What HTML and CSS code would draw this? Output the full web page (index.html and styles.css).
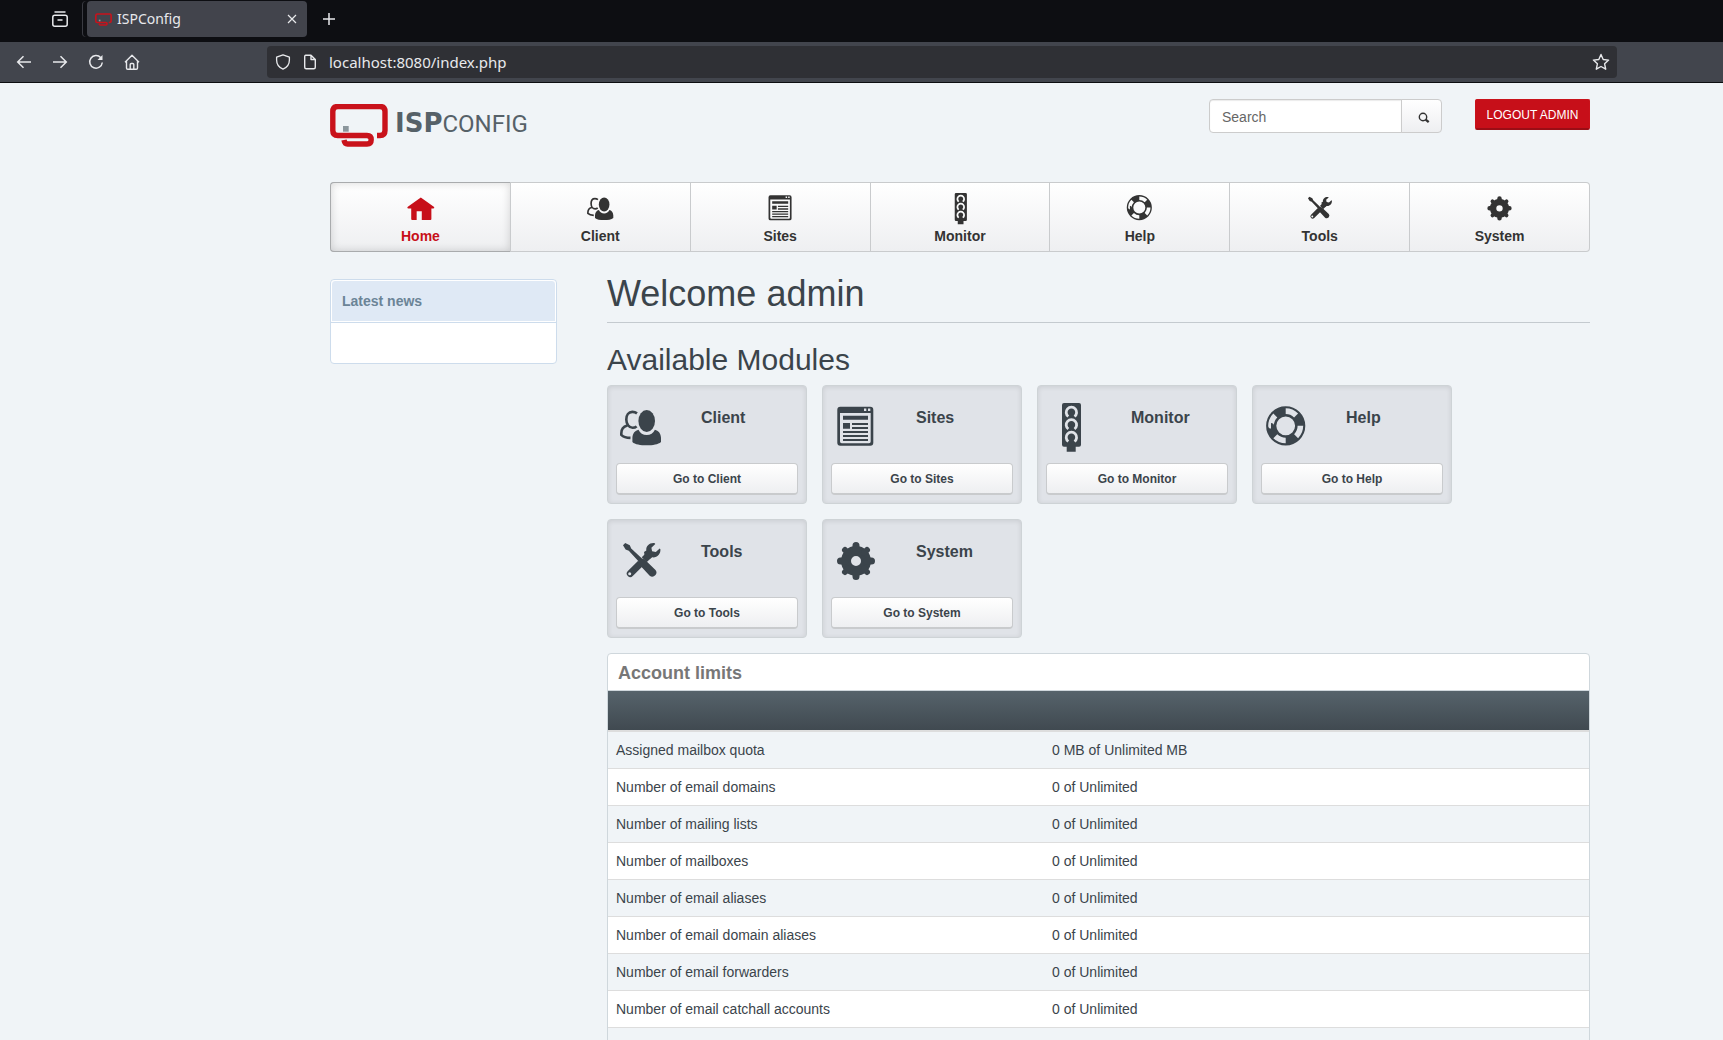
FILE: index.html
```html
<!DOCTYPE html>
<html lang="en">
<head>
<meta charset="utf-8">
<title>ISPConfig</title>
<link rel="stylesheet" href="styles.css">
</head>
<body>
<svg class="sprite" aria-hidden="true">
  <symbol id="i-logo" viewBox="0 0 58 43">
    <g fill="none" stroke="#c9121b" stroke-width="5.4">
      <path d="M47 31.5h3q5 0 5-5V7.500q0-5-5-5H7.800q-5 0-5 5v19q0 5 5 5H37q4.200 0 4.200 4.200T37 40H17.500q-2.800 0-3.500-4"/>
    </g>
    <path d="M13 22h5.700v5.700H13z" fill="#8b969c"/>
  </symbol>
  <symbol id="i-home" viewBox="0 0 48 50">
    <path d="M24.500 7.200 44.800 21.500q2 2.400-1 2.700H41V40.500q0 1.500-1.500 1.500H26V28.500h-8V42h-7q-1.500 0-1.500-1.500V24.200H5.200q-3-.3-1-2.700z" fill="currentColor"/>
  </symbol>
  <symbol id="i-client" viewBox="0 0 48 50">
    <g fill="currentColor">
      <ellipse cx="29.700" cy="18" rx="8.300" ry="11"/>
      <path d="M21.500 26.700c1.500 3.300 4.500 5.300 8.200 5.300s6.700-2 8.200-5.300c3.400.8 5.900 3.500 6.100 8v4.300c-3 2.600-8 3.300-14.300 3.300S18 41.600 15.400 39v-4.300c.2-4.500 2.700-7.200 6.100-8z"/>
    </g>
    <path d="M20 10.400c-1.300-1-3-1.500-4.700-1.500-3.700 0-6 3.300-6 7.500 0 5.200 3 8.400 6.300 8.400 1.700 0 3-.5 4-1.500M10.200 22.600C6.400 23.600 4.300 26.600 4.300 30.500v1.300c2 2 5.500 3 9.200 3.100" fill="none" stroke="currentColor" stroke-width="2.600"/>
  </symbol>
  <symbol id="i-sites" viewBox="0 0 48 50">
    <path fill="currentColor" fill-rule="evenodd" d="M8.300 3.700h30q3 0 3 3v33q0 3-3 3h-30q-3 0-3-3v-33q0-3 3-3zM8 10v28.500q0 1.700 1.700 1.700H37q1.700 0 1.700-1.700V10zM32 5.500V8h2.300V5.500zm4 0V8h2.300V5.500zM11 12.700h25v4H11zm0 7.300h7v5.700h-7zm9 0h16v2H20zm0 4h16v2H20zm-9 4h25v2H11zm0 4h25v2H11zm0 4h25v2H11z"/>
  </symbol>
  <symbol id="i-monitor" viewBox="0 0 48 50">
    <path fill="currentColor" d="M17 0h15q2 0 2 2v39.700q0 2-2 2h-3.300v5h-9v-5H17q-2 0-2-2V2q0-2 2-2z"/>
    <path fill="none" stroke="var(--hole)" stroke-width="2.800" d="M21.300 13.500a5.200 5.200 0 1 1 6.200 0M21.300 26a5.200 5.200 0 1 1 6.200 0M21.300 38.500a5.200 5.200 0 1 1 6.200 0"/>
  </symbol>
  <symbol id="i-help" viewBox="0 0 48 50">
    <circle cx="23.700" cy="22.800" r="14.500" fill="none" stroke="currentColor" stroke-width="10.200"/>
    <circle cx="23.700" cy="22.800" r="14.700" fill="none" stroke="var(--hole)" stroke-width="5.600" pathLength="80" stroke-dasharray="10 10"/>
  </symbol>
  <symbol id="i-tools" viewBox="0 0 48 50">
    <path fill="none" stroke="currentColor" stroke-width="7" stroke-linecap="round" d="M13.300 36.500 31 19"/>
    <path fill="currentColor" d="M28 20.500l-1-5.500 2.300-1.500c-.6-4.500 3.500-8 8.400-7.300l.6.700-3.900 3.800.7 3.500 3.700.7 3.900-3.500.7.800c.4 5-3.500 8.800-8.200 8.100l-2.700 2z"/>
    <circle cx="12.700" cy="36.700" r="1.500" fill="var(--hole)"/>
    <path stroke="var(--hole)" stroke-width="5" d="m20 19 9 9"/>
    <path fill="currentColor" d="M6 8.300 8.200 6l4.600 2.300 1.400 3.200L24.700 21.300q2.100.4 3.500 1.800l10.300 9.800q2 2.400 0 5-2.700 3-5.800.8l-9.300-10q-1.800-1.800-1.700-4.300L11.800 13.700 8.600 12.500z"/>
  </symbol>
  <symbol id="i-system" viewBox="0 0 48 50">
    <g fill="none" stroke="currentColor" stroke-linecap="round">
      <circle cx="24" cy="24" r="10" stroke-width="10"/>
      <path stroke-width="7" d="M24 8.500V13M24 35v4.500M8.500 24H13M35 24h4.500"/>
      <path stroke-width="6" d="m13 13 3 3M32 32l3 3M13 35l3-3M32 16l3-3"/>
    </g>
  </symbol>
</svg>

<header class="browser">
  <div class="tabbar">
    <button class="chrome-btn" aria-label="List tabs"><svg width="16" height="16" viewBox="0 0 16 16" fill="none" stroke="currentColor" stroke-width="1.500"><rect x=".8" y="4.200" width="14.400" height="11" rx="2"/><path d="M2.500 1h11M5.500 9h5"/></svg></button>
    <div class="tab">
      <svg class="favicon" width="17" height="13"><use href="#i-logo"/></svg>
      <span class="tab-title">ISPConfig</span>
      <button class="chrome-btn" aria-label="Close tab"><svg width="10" height="10" viewBox="0 0 10 10" stroke="currentColor" stroke-width="1.200"><path d="m1 1 8 8M9 1 1 9"/></svg></button>
    </div>
    <button class="chrome-btn" aria-label="New tab"><svg width="14" height="14" viewBox="0 0 14 14" stroke="currentColor" stroke-width="1.500"><path d="M7 1v12M1 7h12"/></svg></button>
  </div>
  <div class="toolbar">
    <div class="nav-buttons">
      <button class="chrome-btn" aria-label="Back"><svg width="16" height="16" viewBox="0 0 16 16" fill="none" stroke="currentColor" stroke-width="1.500"><path d="M15 8H2M7.500 2.200 1.700 8l5.800 5.800"/></svg></button>
      <button class="chrome-btn" aria-label="Forward"><svg width="16" height="16" viewBox="0 0 16 16" fill="none" stroke="currentColor" stroke-width="1.500"><path d="M1 8h13M8.500 2.200 14.300 8l-5.800 5.800"/></svg></button>
      <button class="chrome-btn" aria-label="Reload"><svg width="16" height="16" viewBox="0 0 16 16" fill="none" stroke="currentColor" stroke-width="1.500"><path d="M12.800 3.700A6.300 6.300 0 1 0 14.300 8.500"/><path d="M14.500 1v5H9.500z" fill="currentColor" stroke="none"/></svg></button>
      <button class="chrome-btn" aria-label="Home"><svg width="16" height="16" viewBox="0 0 16 16" fill="none" stroke="currentColor" stroke-width="1.400" stroke-linejoin="round"><path d="M1 8.200 8 1.200l7 7M2.500 7v7q0 1.200 1.200 1.200h8.600q1.200 0 1.200-1.200V7M6.200 15v-4.500q0-1 1-1h1.600q1 0 1 1V15"/></svg></button>
    </div>
    <div class="urlbar">
      <svg width="16" height="16" viewBox="0 0 16 16" fill="none" stroke="currentColor" stroke-width="1.300" stroke-linejoin="round"><path d="M8 .8 14.400 3.200V6q0 6.500-6.400 9.200Q1.600 12.500 1.600 6V3.200z"/></svg>
      <svg width="16" height="16" viewBox="0 0 16 16" fill="none" stroke="currentColor" stroke-width="1.400" stroke-linejoin="round"><path d="M3.700 1.200H9L13.300 5.500v7.800q0 1.500-1.500 1.500H4.200q-1.500 0-1.500-1.500V2.700q0-1.500 1-1.500zM9 1.200v4.300h4.300"/></svg>
      <input class="url" type="text" aria-label="Address" value="localhost:8080/index.php">
      <svg width="18" height="18" viewBox="0 0 18 18" fill="none" stroke="currentColor" stroke-width="1.400" stroke-linejoin="round"><path d="m9 1.500 2.200 5 5.400.6-4 3.700 1.100 5.400L9 13.500l-4.700 2.700 1.100-5.400-4-3.700 5.400-.6z"/></svg>
    </div>
  </div>
</header>

<div class="viewport">
  <div class="page">
    <div class="masthead">
      <a class="logo" href="#"><svg width="58" height="43"><use href="#i-logo"/></svg><span class="logo-text"><b>ISP</b>CONFIG</span></a>
      <form class="search">
        <input type="text" placeholder="Search" aria-label="Search">
        <button type="button" aria-label="Submit search"><svg width="12" height="12" viewBox="0 0 12 12" fill="none" stroke="currentColor"><circle cx="5" cy="5" r="3.700" stroke-width="1.400"/><path d="m7.700 7.700 3 2.500" stroke-width="2.400"/></svg></button>
      </form>
      <button class="logout">LOGOUT ADMIN</button>
    </div>

    <nav class="mainnav">
      <a class="active" href="#"><svg><use href="#i-home"/></svg>Home</a>
      <a href="#"><svg><use href="#i-client"/></svg>Client</a>
      <a href="#"><svg><use href="#i-sites"/></svg>Sites</a>
      <a href="#"><svg><use href="#i-monitor"/></svg>Monitor</a>
      <a href="#"><svg><use href="#i-help"/></svg>Help</a>
      <a href="#"><svg><use href="#i-tools"/></svg>Tools</a>
      <a href="#"><svg><use href="#i-system"/></svg>System</a>
    </nav>

    <div class="columns">
      <aside class="news">
        <h2>Latest news</h2>
        <div class="news-body"></div>
      </aside>
      <main>
        <h1>Welcome admin</h1>
        <h2 class="section-title">Available Modules</h2>
        <div class="modules">
          <section class="module"><svg><use href="#i-client"/></svg><h3>Client</h3><button>Go to Client</button></section>
          <section class="module"><svg><use href="#i-sites"/></svg><h3>Sites</h3><button>Go to Sites</button></section>
          <section class="module"><svg><use href="#i-monitor"/></svg><h3>Monitor</h3><button>Go to Monitor</button></section>
          <section class="module"><svg><use href="#i-help"/></svg><h3>Help</h3><button>Go to Help</button></section>
          <section class="module"><svg><use href="#i-tools"/></svg><h3>Tools</h3><button>Go to Tools</button></section>
          <section class="module"><svg><use href="#i-system"/></svg><h3>System</h3><button>Go to System</button></section>
        </div>
        <div class="limits">
          <table>
            <caption>Account limits</caption>
            <thead><tr><th></th><th></th></tr></thead>
            <tbody>
              <tr><td>Assigned mailbox quota</td><td>0 MB of Unlimited MB</td></tr>
              <tr><td>Number of email domains</td><td>0 of Unlimited</td></tr>
              <tr><td>Number of mailing lists</td><td>0 of Unlimited</td></tr>
              <tr><td>Number of mailboxes</td><td>0 of Unlimited</td></tr>
              <tr><td>Number of email aliases</td><td>0 of Unlimited</td></tr>
              <tr><td>Number of email domain aliases</td><td>0 of Unlimited</td></tr>
              <tr><td>Number of email forwarders</td><td>0 of Unlimited</td></tr>
              <tr><td>Number of email catchall accounts</td><td>0 of Unlimited</td></tr>
              <tr><td></td><td></td></tr>
            </tbody>
          </table>
        </div>
      </main>
    </div>
  </div>
</div>
</body>
</html>
```
FILE: styles.css
```css
* { box-sizing: border-box; }

body {
  margin: 0;
  height: 100vh;
  display: flex;
  flex-direction: column;
  overflow: hidden;
  background: #f0f4f7;
  color: #3b444b;
  font: 14px/20px "Liberation Sans", Arial, sans-serif;
}

h1, h2, h3 { margin: 0; }
button, input { font: inherit; color: inherit; }
a { color: inherit; text-decoration: none; }
svg { display: block; flex: none; }
.sprite { position: absolute; width: 0; height: 0; }

/* Browser window */
.browser {
  flex: none;
  color: #e8e9ec;
  font: 15px/24px "Noto Sans", sans-serif;
  border-bottom: 1px solid #0c0d10;
}
.chrome-btn {
  padding: 0;
  border: 0;
  background: none;
}
.tabbar {
  display: flex;
  align-items: center;
  height: 42px;
  padding: 0 16px 4px 52px;
  background: #0d0e12;
}
.tab {
  display: flex;
  align-items: center;
  width: 220px;
  height: 36px;
  margin: 0 15px 0 19px;
  padding: 0 10px 0 8px;
  border-radius: 4px;
  background: #42444c;
  box-shadow: -4px 0 0 #0d0e12, -5px 0 0 #3a3b42;
}
.tab-title { flex: 1; margin-left: 5px; font-size: 14px; }
.toolbar {
  display: flex;
  align-items: center;
  height: 40px;
  padding: 0 106px 0 16px;
  background: #42454d;
}
.nav-buttons {
  display: flex;
  gap: 20px;
  width: 251px;
}
.urlbar {
  flex: 1;
  display: flex;
  align-items: center;
  gap: 11px;
  height: 32px;
  padding: 0 7px 0 8px;
  border-radius: 4px;
  background: #2f3035;
}
.url {
  flex: 1;
  padding: 0;
  border: 0;
  outline: 0;
  background: none;
}

/* Page frame */
.viewport { flex: 1; min-height: 0; overflow: hidden; }
.page { padding: 16px 133px 0 330px; }

.masthead {
  display: flex;
  align-items: flex-start;
  height: 83px;
}
.logo {
  display: flex;
  align-items: flex-start;
  margin: 5px auto 0 0;
  gap: 7px;
}
.logo-text {
  font: 24px/38px Roboto, sans-serif;
  color: #566168;
}
.logo-text b { font: bold 26px/38px "DejaVu Sans", sans-serif; }

.search {
  display: flex;
  width: 233px;
  height: 34px;
  margin-right: 33px;
}
.search input {
  flex: 1;
  min-width: 0;
  padding: 2px 12px 0;
  border: 1px solid #ccc;
  border-radius: 4px 0 0 4px;
  background: #fff;
  box-shadow: inset 0 1px 1px rgba(0, 0, 0, .08);
}
.search input::placeholder { color: #666; opacity: 1; }
.search button {
  display: flex;
  align-items: center;
  justify-content: center;
  width: 41px;
  margin-left: -1px;
  padding: 4px 0 0 4px;
  border: 1px solid #ccc;
  border-radius: 0 4px 4px 0;
  background: linear-gradient(#fff, #eeeff1);
  color: #333;
}
.logout {
  width: 115px;
  height: 31px;
  padding: 2px 0 0;
  border: 1px solid #c9121b;
  border-bottom: 2px solid #9b0d15;
  border-radius: 2px;
  background: #c70f19;
  color: #fff;
  font-size: 12px;
}

.mainnav {
  display: flex;
  height: 70px;
  border: 1px solid #c9cbcd;
  border-left: 0;
  border-radius: 4px;
  background: linear-gradient(#fff, #eeeff1);
  color: #333;
  --hole: #f9fafa;
}
.mainnav a {
  flex: 1 1 0;
  display: flex;
  flex-direction: column;
  align-items: center;
  padding-top: 10px;
  border-left: 1px solid #c9cbcd;
  font-weight: bold;
}
.mainnav svg { width: 31px; height: 32px; margin-bottom: 1px; }
.mainnav .active {
  margin: -1px 0;
  border: 1px solid #a9abad;
  border-right-width: 0;
  border-radius: 4px 0 0 4px;
  color: #c70f19;
  box-shadow: inset 0 0 8px rgba(0, 0, 0, .16);
}

.columns {
  display: flex;
  align-items: flex-start;
  gap: 50px;
  margin-top: 27px;
}

/* News sidebar */
.news {
  width: 227px;
  border: 1px solid #cddcec;
  border-radius: 4px;
  background: #fff;
}
.news h2 {
  padding: 11px 10px;
  border: 1px solid #fff;
  border-radius: 4px 4px 0 0;
  background: #dfe9f5;
  color: #6b8497;
  font-size: 14px;
  line-height: 18px;
}
.news-body { height: 41px; border-top: 1px solid #cddcec; }

/* Dashboard */
main { flex: 1; min-width: 0; }
h1 {
  height: 44px;
  border-bottom: 1px solid #c4cacf;
  font-size: 36px;
  font-weight: normal;
  line-height: 30px;
}
.section-title {
  margin: 20px 0 8px;
  font-size: 30px;
  font-weight: normal;
  line-height: 34px;
}
.modules {
  display: flex;
  flex-wrap: wrap;
  gap: 15px;
  max-width: 860px;
}
.module {
  display: grid;
  grid-template-columns: 85px 1fr;
  grid-template-rows: 59px 32px;
  width: 200px;
  height: 119px;
  padding: 17px 8px 0;
  row-gap: 1px;
  border: 1px solid #ced3d6;
  border-radius: 4px;
  background: #e0e3e8;
  box-shadow: inset 0 1px 5px rgba(0, 0, 0, .1);
  --hole: #e0e3e8;
}
.module svg { width: 48px; height: 50px; margin-left: 1px; }
.module h3 {
  padding-top: 5px;
  font-size: 16px;
  line-height: 20px;
}
.module button {
  grid-column: 1 / -1;
  border: 1px solid #c9cbcd;
  border-bottom-width: 2px;
  border-radius: 4px;
  background: linear-gradient(#fff, #eeeff1);
  font-size: 12px;
  font-weight: bold;
}

.limits {
  margin-top: 15px;
  border: 1px solid #cfd7dc;
  border-radius: 4px 4px 0 0;
  background: #fff;
}
table {
  width: 100%;
  table-layout: fixed;
  border-collapse: separate;
  border-spacing: 0;
}
caption {
  height: 37px;
  padding: 9px 10px;
  border-bottom: 1px solid #cfd7dc;
  color: #777;
  font-size: 18px;
  font-weight: bold;
  text-align: left;
}
thead tr { background: linear-gradient(#56636b, #3f484f); }
th { height: 41px; border-bottom: 2px solid #ddd; }
th:first-child { width: 436px; }
td {
  height: 37px;
  padding: 8px;
  border-bottom: 1px solid #ddd;
}
tbody tr:nth-child(odd) { background: #f0f4f7; }
```
